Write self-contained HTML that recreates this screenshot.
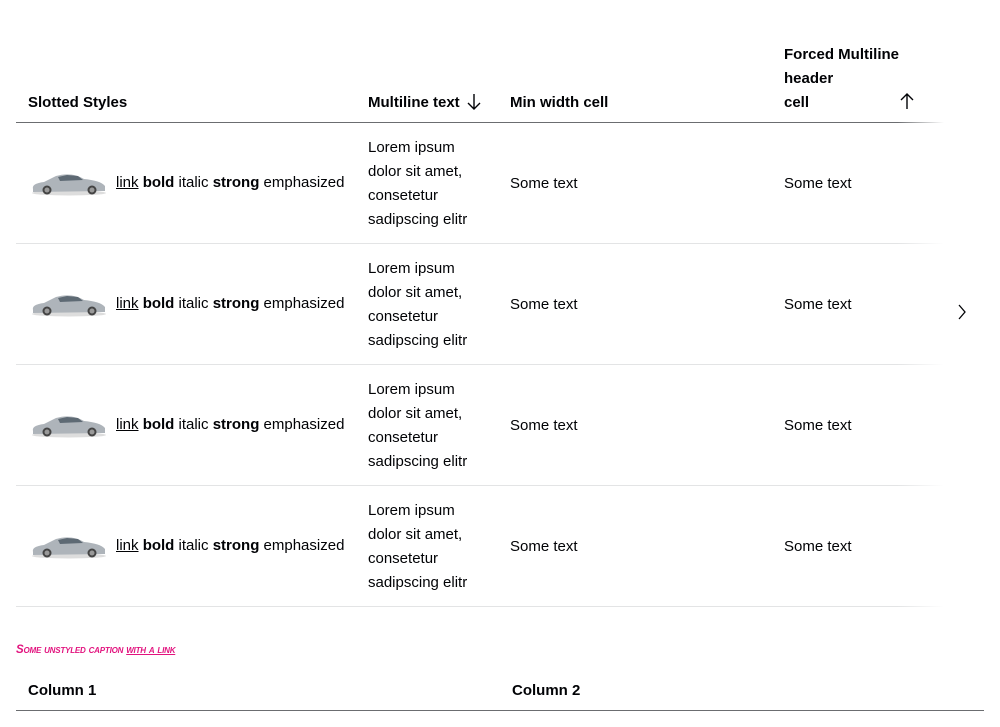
<!DOCTYPE html>
<html><head><meta charset="utf-8"><style>
body{margin:0;width:1000px;height:727px;background:#fff;font-family:"Liberation Sans",sans-serif;color:#010205;font-size:15px;position:relative;overflow:hidden}
.a{position:absolute;white-space:nowrap;line-height:24px}
.h{font-weight:bold;font-size:15px}
.l{position:absolute;height:1px;left:16px;width:928px;background:linear-gradient(90deg,#e3e4e5 95%,rgba(227,228,229,0))}
.ml{font-size:15px}
</style></head><body>
<div class="a h" style="left:28px;top:91px">Slotted Styles</div>
<div class="a h" style="left:368px;top:91px">Multiline text</div>
<svg style="position:absolute;left:466px;top:93px" width="16" height="18" viewBox="0 0 16 18"><path d="M8 1V16M2 10L8 16L14 10" fill="none" stroke="#010205" stroke-width="1.4"/></svg>
<div class="a h" style="left:510px;top:91px">Min width cell</div>
<div class="a h" style="left:784px;top:43px">Forced Multiline<br>header<br>cell</div>
<svg style="position:absolute;left:899px;top:92px" width="16" height="18" viewBox="0 0 16 18"><path d="M8 17V2M2 8L8 2L14 8" fill="none" stroke="#010205" stroke-width="1.4"/></svg>
<div style="position:absolute;left:16px;top:122px;width:928px;height:1px;background:linear-gradient(90deg,#6b6d70 95%,rgba(107,109,112,0))"></div>

<div id="rows"></div>
<script>
var html='';
for(var i=0;i<4;i++){var t=123+i*121;
html+='<svg style="position:absolute;left:30px;top:'+(t+48)+'px" width="78" height="26" viewBox="0 0 78 26"><ellipse cx="39" cy="22" rx="37" ry="2.5" fill="#ddd"/><path d="M3 18C2 14 6 12 14 11L26 5C36 2 46 3 54 8C64 9 72 11 75 15L75 20L3 21Z" fill="#aeb4ba"/><path d="M28 6L37 4L48 5L53 9L30 10Z" fill="#5e6a74"/><circle cx="17" cy="19" r="4.5" fill="#444"/><circle cx="17" cy="19" r="2.5" fill="#999"/><circle cx="62" cy="19" r="4.5" fill="#444"/><circle cx="62" cy="19" r="2.5" fill="#999"/></svg>';
html+='<div class="a" style="left:116px;top:'+(t+48)+'px"><u>link</u> <b>bold</b> italic <b>strong</b> emphasized</div>';
html+='<div class="a ml" style="left:368px;top:'+(t+13)+'px">Lorem ipsum<br>dolor sit amet,<br>consetetur<br>sadipscing elitr</div>';
html+='<div class="a" style="left:510px;top:'+(t+49)+'px">Some text</div>';
html+='<div class="a" style="left:784px;top:'+(t+49)+'px">Some text</div>';
html+='<div class="l" style="top:'+(t+120)+'px"></div>';}
document.getElementById('rows').innerHTML=html;
</script>
<svg style="position:absolute;left:956px;top:303px" width="12" height="18" viewBox="0 0 12 18"><path d="M3 2L9 9L3 16" fill="none" stroke="#010205" stroke-width="1.3"/></svg>
<div class="a" style="left:16px;top:638px;color:#e2137e;font-size:11.5px;font-weight:bold;font-style:italic;font-variant:small-caps;letter-spacing:-0.2px">Some unstyled caption <u>with a link</u></div>
<div class="a h" style="left:28px;top:679px">Column 1</div>
<div class="a h" style="left:512px;top:679px">Column 2</div>
<div style="position:absolute;left:16px;top:710px;width:968px;height:1px;background:#6b6d70"></div>
</body></html>
